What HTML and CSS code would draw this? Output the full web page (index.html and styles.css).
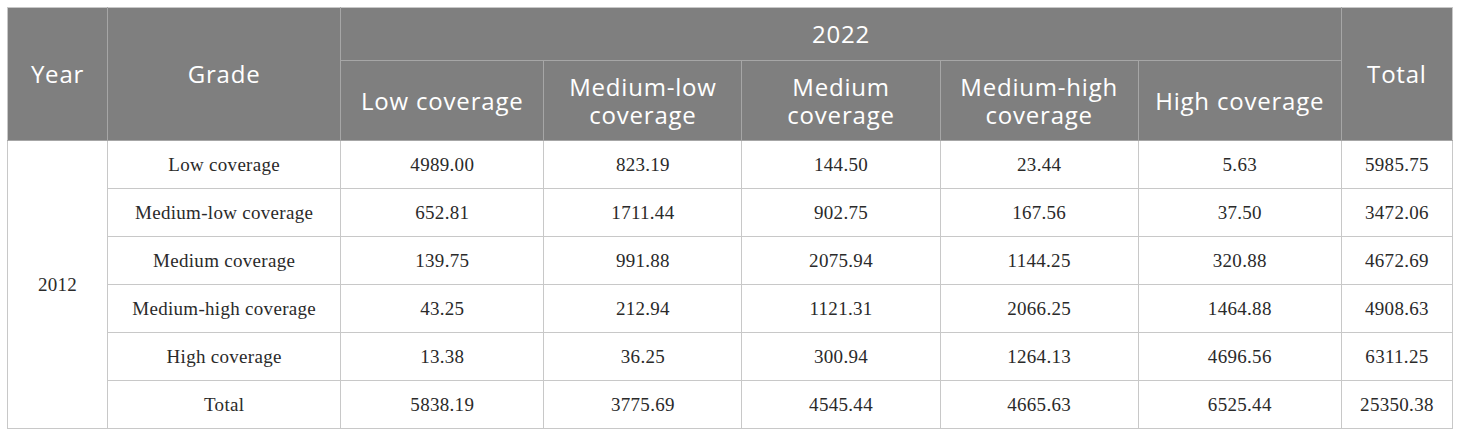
FILE: index.html
```html
<!DOCTYPE html>
<html>
<head>
<meta charset="utf-8">
<link rel="stylesheet" href="styles.css">
</head>
<body>
<table class="tbl">
  <colgroup>
    <col class="c-year">
    <col class="c-grade">
    <col class="c-a">
    <col class="c-b">
    <col class="c-b">
    <col class="c-b">
    <col class="c-a">
    <col class="c-total">
  </colgroup>
  <thead>
    <tr class="h1">
      <th rowspan="2">Year</th>
      <th rowspan="2">Grade</th>
      <th colspan="5">2022</th>
      <th rowspan="2" class="tot">Total</th>
    </tr>
    <tr class="h2">
      <th>Low coverage</th>
      <th>Medium-low coverage</th>
      <th>Medium coverage</th>
      <th>Medium-high coverage</th>
      <th>High coverage</th>
    </tr>
  </thead>
  <tbody>
    <tr>
      <td rowspan="6" class="year">2012</td>
      <td>Low coverage</td><td>4989.00</td><td>823.19</td><td>144.50</td><td>23.44</td><td>5.63</td><td>5985.75</td>
    </tr>
    <tr><td>Medium-low coverage</td><td>652.81</td><td>1711.44</td><td>902.75</td><td>167.56</td><td>37.50</td><td>3472.06</td></tr>
    <tr><td>Medium coverage</td><td>139.75</td><td>991.88</td><td>2075.94</td><td>1144.25</td><td>320.88</td><td>4672.69</td></tr>
    <tr><td>Medium-high coverage</td><td>43.25</td><td>212.94</td><td>1121.31</td><td>2066.25</td><td>1464.88</td><td>4908.63</td></tr>
    <tr><td>High coverage</td><td>13.38</td><td>36.25</td><td>300.94</td><td>1264.13</td><td>4696.56</td><td>6311.25</td></tr>
    <tr><td>Total</td><td>5838.19</td><td>3775.69</td><td>4545.44</td><td>4665.63</td><td>6525.44</td><td>25350.38</td></tr>
  </tbody>
</table>
</body>
</html>
```
FILE: styles.css
```css
html, body {
  margin: 0;
  padding: 0;
  background: #ffffff;
}
body {
  padding: 7px 0 0 7px;
}
.tbl {
  border-collapse: collapse;
  table-layout: fixed;
  width: 1446px;
}
.c-year { width: 100px; }
.c-grade { width: 233px; }
.c-a { width: 203px; }
.c-b { width: 198px; }
.c-total { width: 111px; }

.tbl th {
  background: #7f7f7f;
  color: #ffffff;
  font-family: "Open Sans", "Noto Sans", sans-serif;
  font-weight: 400;
  font-size: 24px;
  letter-spacing: 0.8px;
  line-height: 28px;
  text-align: center;
  vertical-align: middle;
  border: 1px solid #a6a6a6;
  padding: 0 6px;
}
.tbl thead tr:first-child th { border-top-color: #c8c8c8; }
.tbl thead th:first-child { border-left-color: #c8c8c8; }
.tbl th.tot { border-right-color: #c8c8c8; }
.h1 { height: 53px; }
.h2 { height: 80px; }

.tbl td {
  font-family: "Liberation Serif", "Times New Roman", serif;
  font-size: 19px;
  letter-spacing: 0.3px;
  color: #2a2a2a;
  text-align: center;
  vertical-align: middle;
  border: 1px solid #c8c8c8;
  height: 47px;
  padding: 0 4px;
}
```
